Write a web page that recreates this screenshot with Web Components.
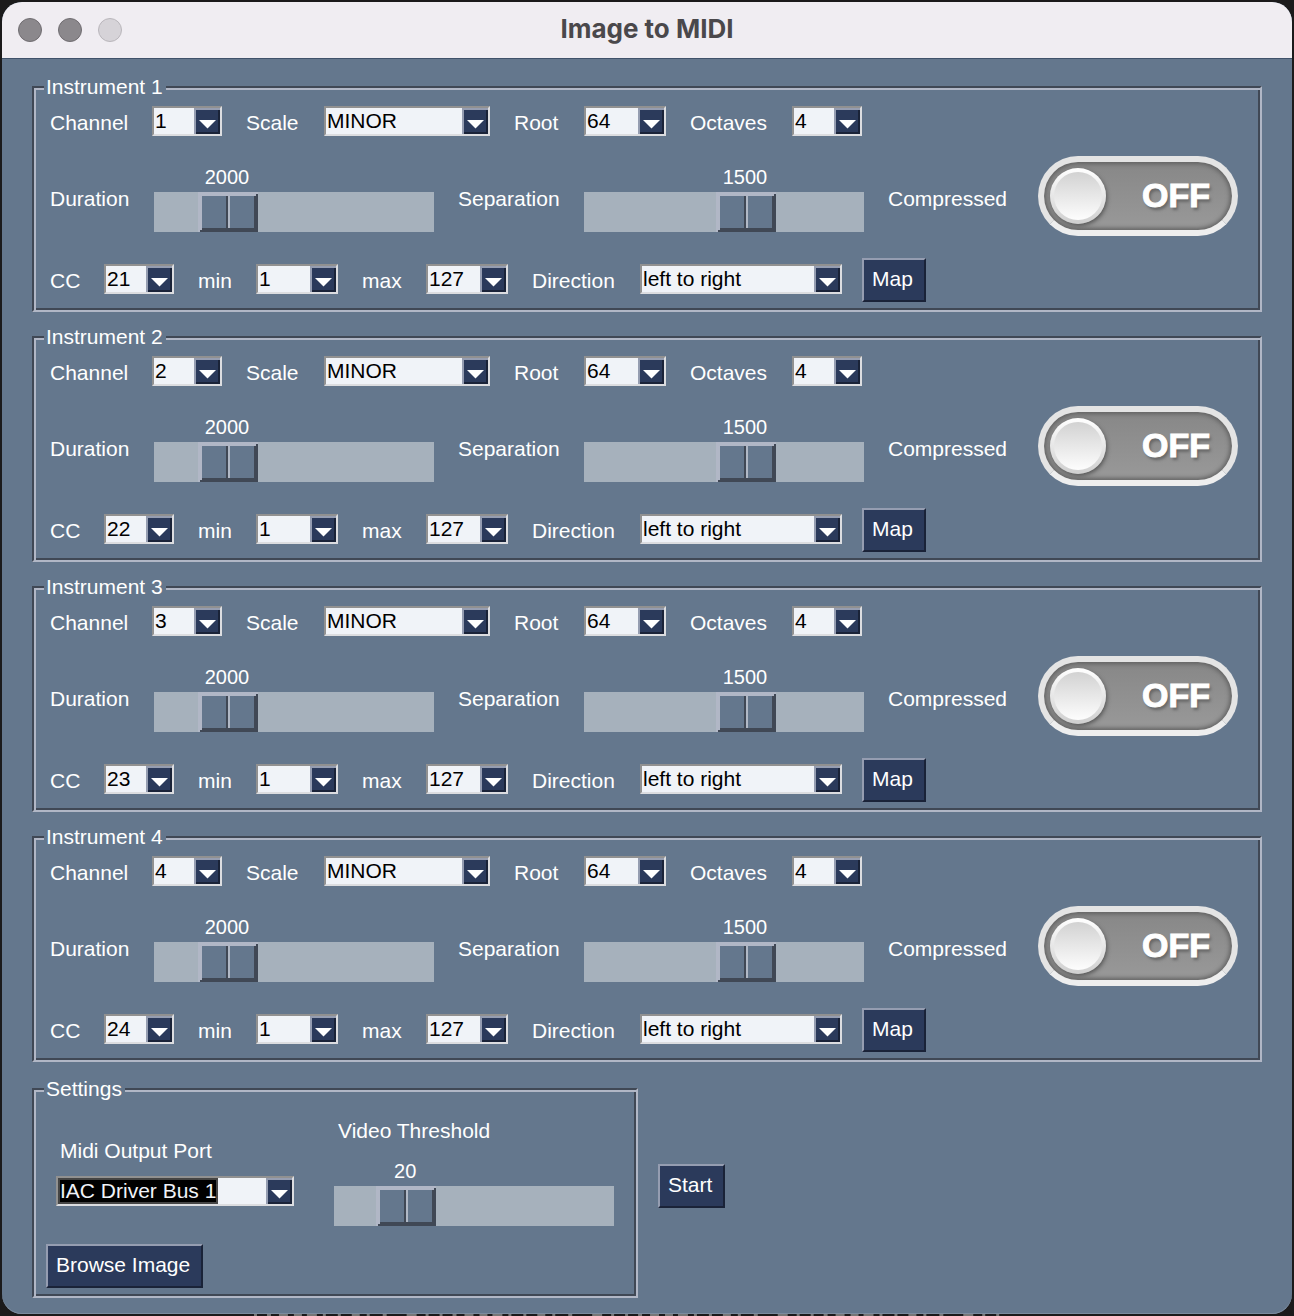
<!DOCTYPE html>
<html lang="en">
<head>
<meta charset="utf-8">
<title>Image to MIDI</title>
<style>
  body {
    margin: 0;
    background: #1b1a1b;
    color: #fff;
    font: 21px/22px "Liberation Sans", Arial, sans-serif;
  }
</style>
</head>
<body>
<midi-app></midi-app>
<script>
const base = `
  * { box-sizing: border-box; }
  label { color: #fff; }
`;

class BaseElement extends HTMLElement {
  connectedCallback() {
    if (this.shadowRoot) return;
    const root = this.attachShadow({ mode: "open" });
    root.innerHTML = `<style>${base}</style>` + this.render();
    this.ready(root);
  }
  attr(name, fallback = "") { return this.getAttribute(name) ?? fallback; }
  ready() {}
}

/* Label and drop-down list */
customElements.define("combo-field", class extends BaseElement {
  render() {
    const options = this.attr("options").split("|")
      .map(o => `<option${o === this.attr("value") ? " selected" : ""}>${o}</option>`).join("");
    return `
    <style>
      :host { display: flex; align-items: center; }
      :host([stacked]) { flex-direction: column; align-items: flex-start; gap: 14px; }
      label { width: var(--label, auto); padding: 4px 0 0 4px; flex: none; white-space: nowrap; }
      :host([stacked]) label { padding-top: 0; }
      .box {
        display: grid; width: var(--box); height: 30px; background: #f0f3f8;
        border: 2px solid; border-color: #919191 #dcdde0 #dcdde0 #919191;
      }
      select {
        grid-area: 1 / 1; appearance: none; margin: 0; border: 0; border-radius: 0; outline: 0;
        padding: 0 26px 0 1px; width: 100%; height: 26px; background: none; color: #000;
        font: inherit; line-height: 26px;
      }
      :host([highlighted]) select {
        field-sizing: content; width: auto; justify-self: start; padding: 0;
        line-height: 22px; background: #000; color: #f0f3f8; border: 2px solid #454545;
      }
      svg { grid-area: 1 / 1; justify-self: end; pointer-events: none; display: block; }
    </style>
    <label for="list">${this.attr("label")}</label>
    <div class="box">
      <select id="list">${options}</select>
      <svg width="26" height="26" viewBox="0 0 26 26" aria-hidden="true">
        <path d="M0 0H26V26H0Z" fill="#959db1"/>
        <path d="M2 2H26V26H2Z" fill="#1a2338"/>
        <path d="M2 2H24V24H2Z" fill="#2b3a5b"/>
        <path d="M5 12H22L13.500 20.500Z" fill="#fff"/>
      </svg>
    </div>`;
  }
});

/* Label, horizontal scale and its current value */
customElements.define("scale-field", class extends BaseElement {
  render() {
    return `
    <style>
      :host { display: flex; align-items: center; padding-top: 2px; }
      :host([stacked]) { flex-direction: column; align-items: flex-start; gap: 14px; padding-top: 0; }
      label { width: var(--label, auto); padding: 4px 0 0 4px; flex: none; white-space: nowrap; }
      :host([stacked]) label { padding-top: 0; }
      .scale { width: 280px; }
      output {
        display: block; width: 58px; height: 30px; line-height: 30px; text-align: center;
        font-size: 20px; margin-left: calc(var(--at) * (100% - 60px));
      }
      input {
        display: block; appearance: none; margin: 0; width: 100%; height: 40px;
        background: #a6b1bc; outline: 0;
      }
      input::-webkit-slider-thumb {
        appearance: none; width: 60px; height: 40px; border: 0; border-radius: 0;
        background: linear-gradient(90deg, #64778d 28px, #404855 28px 30px, #b1b9c6 30px 32px, #64778d 32px);
        box-shadow: inset 2px 2px #b1b7c6, inset -2px -2px #404855, inset 4px 4px #b1b7c6, inset -4px -4px #404855;
      }
    </style>
    <label for="range">${this.attr("label")}</label>
    <div class="scale">
      <output for="range"></output>
      <input id="range" type="range" min="${this.attr("min", "0")}" max="${this.attr("max")}" value="${this.attr("value")}">
    </div>`;
  }
  ready(root) {
    const input = root.querySelector("input");
    const output = root.querySelector("output");
    const update = () => {
      output.textContent = input.value;
      output.style.setProperty("--at", (input.value - input.min) / (input.max - input.min));
    };
    input.addEventListener("input", update);
    update();
  }
});

/* Label and on/off switch */
customElements.define("toggle-field", class extends BaseElement {
  render() {
    return `
    <style>
      :host { display: flex; align-items: center; }
      label { width: var(--label, auto); padding: 6px 0 0 4px; flex: none; }
      .switch { display: grid; width: 200px; height: 80px; }
      input {
        grid-area: 1 / 1; appearance: none; margin: 0; width: 200px; height: 80px; border-radius: 40px;
        border: 6px solid #e4e4e4; border-bottom-color: #eee;
        background: linear-gradient(#878787, #999);
        box-shadow: inset 0 0 4px 2px #626262;
        display: flex; align-items: center; padding-left: 6px; outline: 0;
      }
      input::before {
        content: ""; width: 56px; height: 56px; border-radius: 50%;
        background:
          linear-gradient(#d2d2d2, #fdfdfd) content-box,
          linear-gradient(#fff, #cfcfcf);
        padding: 4px; box-sizing: border-box; box-shadow: 1px 2px 4px #555;
        background-clip: content-box, border-box;
      }
      span {
        grid-area: 1 / 1; place-self: center end; padding: 0 28px 2px 0; pointer-events: none;
        font-size: 34px; line-height: 40px; font-weight: 700; color: #fff;
        -webkit-text-stroke: 1px #fff; text-shadow: 2px 3px 3px #666;
      }
      input:checked { justify-content: flex-end; padding: 0 6px 0 0; }
      input:checked + span { place-self: center start; padding: 0 0 2px 28px; }
    </style>
    <label for="toggle">${this.attr("label")}</label>
    <div class="switch"><input id="toggle" type="checkbox" role="switch"><span>OFF</span></div>`;
  }
  ready(root) {
    const input = root.querySelector("input");
    input.addEventListener("change", () => {
      root.querySelector("span").textContent = input.checked ? "ON" : "OFF";
    });
  }
});

customElements.define("push-button", class extends BaseElement {
  render() {
    return `
    <style>
      :host { display: block; flex: none; }
      button {
        display: block; height: 44px; margin: 0; padding: 0 11px 2px 8px; border: 2px solid;
        border-color: #959db1 #1a2338 #1a2338 #959db1; background: #2b3a5b; color: #fff;
        font: inherit; white-space: nowrap;
      }
      button:active { border-color: #1a2338 #959db1 #959db1 #1a2338; }
    </style>
    <button type="button"><slot></slot></button>`;
  }
});

/* Titled frame with an etched edge */
customElements.define("group-frame", class extends BaseElement {
  render() {
    return `
    <style>
      :host { display: block; }
      fieldset {
        margin: 0; padding: 8px 22px 8px 12px; min-width: 0;
        border: 2px solid; border-color: #404855 #b1b7c6 #b1b7c6 #404855;
        box-shadow: inset 2px 2px #b1b7c6, inset -2px -2px #404855;
      }
      legend { margin-left: -2px; padding: 0 3px 0 2px; height: 22px; background: #64778d; }
    </style>
    <fieldset><legend>${this.attr("title-text")}</legend><slot></slot></fieldset>`;
  }
});

customElements.define("instrument-panel", class extends BaseElement {
  render() {
    const n = this.attr("number");
    return `
    <style>
      :host { display: block; }
      .rows { display: flex; flex-direction: column; gap: 20px; }
      .row { display: flex; align-items: center; gap: 20px; }
      .middle { padding-bottom: 2px; }
      .lower { align-items: flex-start; }
      .lower combo-field { padding-top: 6px; }
    </style>
    <group-frame title-text="Instrument ${n}">
      <div class="rows">
        <div class="row">
          <combo-field style="--label:106px;--box:70px" label="Channel" options="1|2|3|4" value="${n}"></combo-field>
          <combo-field style="--label:82px;--box:166px" label="Scale" options="MAJOR|MINOR" value="MINOR"></combo-field>
          <combo-field style="--label:74px;--box:82px" label="Root" options="60|64|67" value="64"></combo-field>
          <combo-field style="--label:106px;--box:70px" label="Octaves" options="1|2|3|4" value="4"></combo-field>
        </div>
        <div class="row middle">
          <scale-field style="--label:108px" label="Duration" max="10000" value="2000"></scale-field>
          <scale-field style="--label:130px" label="Separation" max="2500" value="1500"></scale-field>
          <toggle-field style="--label:154px" label="Compressed"></toggle-field>
        </div>
        <div class="row lower">
          <combo-field style="--label:58px;--box:70px" label="CC" options="21|22|23|24" value="2${n}"></combo-field>
          <combo-field style="--label:62px;--box:82px" label="min" options="1|64|127" value="1"></combo-field>
          <combo-field style="--label:68px;--box:82px" label="max" options="1|64|127" value="127"></combo-field>
          <combo-field style="--label:112px;--box:202px" label="Direction" options="left to right|right to left" value="left to right"></combo-field>
          <push-button>Map</push-button>
        </div>
      </div>
    </group-frame>`;
  }
});

customElements.define("settings-panel", class extends BaseElement {
  render() {
    return `
    <style>
      :host { display: block; }
      .fields { display: flex; align-items: center; gap: 40px; padding: 12px 0 18px 10px; }
    </style>
    <group-frame title-text="Settings">
      <div class="fields">
        <combo-field stacked highlighted style="--box:238px" label="Midi Output Port" options="IAC Driver Bus 1" value="IAC Driver Bus 1"></combo-field>
        <scale-field stacked label="Video Threshold" min="1" max="100" value="20"></scale-field>
      </div>
      <push-button>Browse Image</push-button>
    </group-frame>`;
  }
});

customElements.define("app-window", class extends BaseElement {
  render() {
    return `
    <style>
      :host {
        display: block; background: #64778d; border-radius: 20px; overflow: hidden;
        box-shadow: inset 0 -1px #7b8b9e;
      }
      header {
        display: grid; grid-template-columns: 1fr auto 1fr; align-items: center; height: 57px;
        padding: 0 16px; background: #f0edf2; border-bottom: 1px solid #40526a;
      }
      .lights { display: flex; gap: 16px; }
      .lights i { width: 24px; height: 24px; border-radius: 50%; background: #8b888c; border: 1px solid #706d71; }
      .lights i:last-child { background: #d6d3d8; border-color: #b9b6bb; }
      h1 { margin: 0; padding-bottom: 2px; font: 700 26px/30px Inter, sans-serif; color: #4a484b; }
    </style>
    <header>
      <div class="lights"><i></i><i></i><i></i></div>
      <h1>${this.attr("heading")}</h1>
    </header>
    <slot></slot>`;
  }
});

customElements.define("midi-app", class extends BaseElement {
  render() {
    return `
    <style>
      :host { display: block; padding: 2px 2px 0; }
      main { display: flex; flex-direction: column; gap: 14px; padding: 17px 30px 16px; }
      .bottom { display: flex; align-items: center; gap: 20px; padding-top: 2px; }
      .bottom push-button { padding-bottom: 4px; }
      .behind { display: block; width: 58%; height: 2px; margin: 0 auto 0 252px; }
    </style>
    <app-window heading="Image to MIDI">
      <main>
        <instrument-panel number="1"></instrument-panel>
        <instrument-panel number="2"></instrument-panel>
        <instrument-panel number="3"></instrument-panel>
        <instrument-panel number="4"></instrument-panel>
        <div class="bottom">
          <settings-panel></settings-panel>
          <push-button>Start</push-button>
        </div>
      </main>
    </app-window>
    <svg class="behind" viewBox="0 0 750 2" preserveAspectRatio="none" aria-hidden="true">
      <path d="M0 1H750" stroke="#777" stroke-width="2" stroke-dasharray="3 10 4 8 9 6 8 5 10 6 3 12 3 11 8 7 3 13 4 20 10 9 3 11"/>
    </svg>`;
  }
});
</script>
</body>
</html>
